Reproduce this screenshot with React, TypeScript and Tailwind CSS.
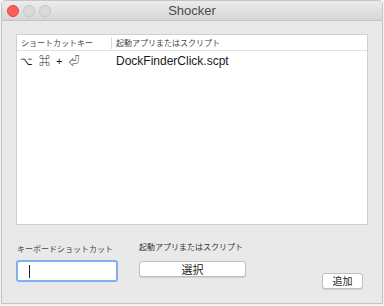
const latin = { fontFamily: '"Liberation Sans", "Noto Sans CJK JP", sans-serif' };
const cjk = { fontFamily: '"Noto Sans CJK JP", "Liberation Sans", sans-serif' };

function TrafficLights() {
  return (
    <div className="absolute left-[5px] top-[4px] flex gap-[4px]">
      <span className="h-[12px] w-[12px] rounded-full border border-[#e0443e] bg-[#fc605c]" />
      <span className="h-[12px] w-[12px] rounded-full border border-[#c6c6c6] bg-[#d9d9d9]" />
      <span className="h-[12px] w-[12px] rounded-full border border-[#c6c6c6] bg-[#d9d9d9]" />
    </div>
  );
}

export default function App() {
  return (
    <div className="h-[306px] w-[384px] bg-[#f3f3f3]" style={latin}>
      <div className="ml-[1px] flex h-[304px] w-[382px] flex-col overflow-hidden rounded-t-[5px] border border-[#c4c4c4] bg-[#e9e9e9]">
        <div className="relative flex h-[20px] shrink-0 items-center justify-center border-b border-[#c2c2c2] bg-gradient-to-b from-[#ececec] to-[#d6d6d6]">
          <TrafficLights />
          <span className="text-[13px] text-[#4a4a4a]">Shocker</span>
        </div>

        <div className="flex flex-1 flex-col px-[14px] pt-[13px]">
          <div className="flex h-[191px] w-[352px] flex-col border border-[#cfcfcf] bg-white">
            <div className="flex h-[16px] items-center border-b border-[#e2e2e2] text-[8px] text-[#444]" style={cjk}>
              <div className="w-[95px] border-r border-[#dcdcdc] pl-[4px] leading-[12px]">ショートカットキー</div>
              <div className="pl-[4px]">起動アプリまたはスクリプト</div>
            </div>
            <div className="flex h-[20px] items-center text-[12px] text-[#1a1a1a]">
              <div className="flex w-[95px] items-center gap-[6px] pl-[3px] text-[11px]">
                <span>⌥</span>
                <span>⌘</span>
                <span>+</span>
                <span>⏎</span>
              </div>
              <div className="pl-[4px]">DockFinderClick.scpt</div>
            </div>
          </div>

          <div className="mt-[18px] flex">
            <div className="flex w-[123px] flex-col">
              <span className="ml-[1px] text-[8px] leading-[12px] text-[#444]" style={cjk}>
                キーボードショットカット
              </span>
              <div className="mt-[5px] flex h-[22px] w-[102px] items-center rounded-[3px] border-2 border-[#82b0ef] bg-white px-[11px]">
                <span className="h-[13px] w-px bg-[#222]" />
              </div>
            </div>
            <div className="flex w-[183px] flex-col">
              <span className="mt-[-2px] text-[8px] leading-[12px] text-[#333]" style={cjk}>
                起動アプリまたはスクリプト
              </span>
              <button
                type="button"
                className="mt-[8px] h-[16px] w-[107px] rounded-[3px] border border-[#c0c0c0] bg-white text-[11px] leading-[14px] text-[#222] shadow-[0_1px_0_#d0d0d0]"
                style={cjk}
              >
                選択
              </button>
            </div>
            <div className="flex flex-col justify-end">
              <button
                type="button"
                className="mb-[-7px] h-[16px] w-[41px] rounded-[3px] border border-[#c0c0c0] bg-white text-[10px] leading-[14px] text-[#222] shadow-[0_1px_0_#d0d0d0]"
                style={cjk}
              >
                追加
              </button>
            </div>
          </div>
        </div>
      </div>
    </div>
  );
}
